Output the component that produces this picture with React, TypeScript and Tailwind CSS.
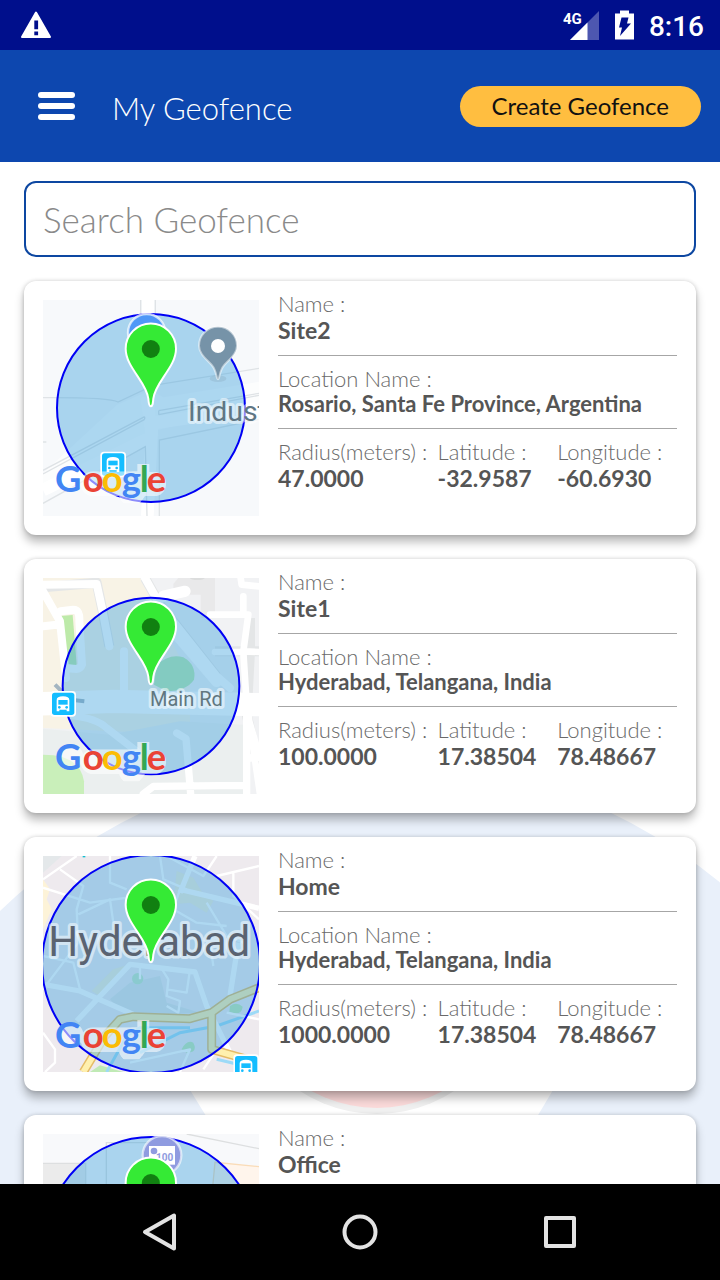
import type { ReactNode } from "react";

type Geofence = {
  name: string;
  location?: string;
  radius?: string;
  latitude?: string;
  longitude?: string;
  map: ReactNode;
};

function Halo({ x, y, size, color, children }: { x: number; y: number; size: number; color: string; children: string }) {
  return (
    <text
      x={x}
      y={y}
      fontSize={size}
      fill={color}
      stroke="#ffffff"
      strokeOpacity={0.5}
      strokeWidth={18}
      strokeLinejoin="round"
      paintOrder="stroke"
      fontFamily="Roboto, sans-serif"
    >
      {children}
    </text>
  );
}

function Bus({ x, y }: { x: number; y: number }) {
  return (
    <g transform={`translate(${x} ${y})`}>
      <rect x={-5} y={-5} width={77} height={77} rx={11} fill="#ffffff" />
      <rect width={67} height={67} rx={8} fill="#14bdff" />
      <path d="M14 56V22q0-11 19-11t19 11v34h-8v-5H22v5z" fill="#ffffff" />
      <path d="M19 22h28v14H19z" fill="#14bdff" />
      <circle cx={22} cy={44} r={4} fill="#14bdff" />
      <circle cx={44} cy={44} r={4} fill="#14bdff" />
    </g>
  );
}

function Pin() {
  return (
    <g>
      <path
        d="M362 349C357 349 356 340 355 326C350 276 287 232 287 176A75.500 75.500 0 0 1 438 176C438 232 375 276 370 326C369 340 368 349 362 349Z"
        fill="#35ea35"
        stroke="#ffffff"
        strokeWidth={6}
      />
      <circle cx={362.500} cy={177} r={27} fill="#118011" />
    </g>
  );
}

const LOGO: [string, number, string][] = [
  ["G", 75, "#4285f4"],
  ["o", 158, "#ea4335"],
  ["o", 215, "#fbbc05"],
  ["g", 275, "#4285f4"],
  ["l", 329, "#34a853"],
  ["e", 350, "#ea4335"],
];

function GoogleLogo() {
  return (
    <g>
      <path
        d="M122 566h1M189 581h190M304 581v30M341 550v44"
        stroke="#ffffff"
        strokeOpacity={0.55}
        strokeWidth={74}
        strokeLinecap="round"
        fill="none"
        clipPath="url(#logo-halo)"
      />
      <text y={607} fontFamily="Lato, sans-serif" fontSize={109} fontWeight={700}>
        {LOGO.map(([letter, x, color]) => (
          <tspan key={x} x={x} fill={color}>
            {letter}
          </tspan>
        ))}
      </text>
    </g>
  );
}

function MapView({ title, base, radius, ground, above }: { title: string; base: string; radius: number; ground: ReactNode; above: ReactNode }) {
  return (
    <svg viewBox="39 30 648 648" role="img" aria-label={title} className="my-[19px] size-[216px] shrink-0">
      <defs>
        <clipPath id="logo-halo">
          <path d="M72 566A50 50 0 0 1 158 536L175 544H322V522H358V546H380A37 37 0 0 1 380 618H345L330 640H280L262 618H170A54 54 0 0 1 72 566Z" />
        </clipPath>
      </defs>
      <rect x={39} y={30} width={648} height={648} fill={base} />
      {ground}
      <circle cx={363} cy={354} r={radius} fill="#349ddc" fillOpacity={0.4} stroke="#0000f5" strokeWidth={6} />
      {above}
      <Pin />
      <GoogleLogo />
    </svg>
  );
}

const site2Map = (
  <MapView
    title="Map of Site2"
    base="#f7f9fb"
    radius={282}
    ground={
      <g>
        <path d="M39 585L362 425L687 346V275L400 322L362 300L260 345L39 550z" fill="#ffffff" opacity={0.6} />
        <path d="M354 30V120M352 678L366 400L700 352M39 600L366 440M366 440L350 320" stroke="#ffffff" strokeWidth={38} fill="none" />
        <path
          d="M332 30V100M376 30V100M39 323Q240 322 264 336L370 286L687 235M39 541L344 380M39 552L344 388M344 380v8M386 362L687 310M386 374L687 316M386 362v12M39 640L346 470L351 678M388 678V450L687 388M39 456h10"
          stroke="#dfe3e6"
          strokeWidth={4}
          fill="none"
        />
      </g>
    }
    above={
      <g>
        <circle cx={350} cy={128} r={56} fill="#4f98f7" stroke="#ffffff" strokeOpacity={0.7} strokeWidth={7} />
        <ellipse cx={564} cy={266} rx={25} ry={10} fill="#7e9db0" opacity={0.25} />
        <path d="M564 268C558 268 562 245 545 225C530 208 507 192 507 167A57 57 0 0 1 621 167C621 192 598 208 583 225C566 245 570 268 564 268Z" fill="#7693a8" stroke="#ffffff" strokeOpacity={0.5} strokeWidth={6} />
        <circle cx={564} cy={168} r={21} fill="#ffffff" />
        <Halo x={474} y={392} size={85} color="#5f7684">
          Indust
        </Halo>
        <Bus x={216} y={490} />
      </g>
    }
  />
);

const site1Map = (
  <MapView
    title="Map of Site1"
    base="#f1f2f4"
    radius={265}
    ground={
      <g>
        <path d="M39 30H330L480 330V500L39 480z" fill="#f8f3e6" />
        <path d="M39 482L240 500L450 460L640 470L650 678H39z" fill="#ebefef" />
        <path d="M445 30H555V150H512V80H430V48z" fill="#e9e9ea" />
        <ellipse cx={502} cy={30} rx={22} ry={6} fill="#dcdddd" />
        <path d="M92 144L128 141L140 290L112 293z" fill="#bdeaa9" />
        <path d="M39 560Q150 560 162 640V678H39z" fill="#c9efba" />
        <g stroke="#e4e6e7" strokeWidth={30} fill="none" strokeLinejoin="round">
          <path d="M39 58L200 44L218 130L238 235M345 30L390 110L560 325M687 250H555M660 150V250L650 440L687 600" />
        </g>
        <g stroke="#ffffff" fill="none" strokeLinejoin="round" strokeLinecap="round">
          <path d="M20 408L250 400L687 410" strokeWidth={70} />
          <path d="M39 50L200 48L218 130L238 235M39 70L90 160L108 330M39 175L80 170M92 130L130 125Q150 125 148 160L156 290Q150 306 130 302L110 300M282 250V370M345 30L390 110L560 325L600 360" strokeWidth={24} />
          <path d="M400 85L465 70M440 200L560 340" strokeWidth={34} />
          <path d="M540 140H655L640 250L687 252M555 252H640L652 440L687 560M640 85V130M687 55L635 50L632 30M655 440L690 678" strokeWidth={20} />
          <path d="M120 442Q200 450 230 480L365 585M440 495L468 512L482 678M340 678L370 655L640 652M660 570L687 568M650 410V678" strokeWidth={22} />
        </g>
        <path d="M380 290Q420 255 460 268Q500 290 492 335Q470 368 410 370L372 350z" fill="#b8e9b0" />
        <path d="M75 350L120 395L163 400" stroke="#a4b5c1" strokeWidth={12} fill="none" />
      </g>
    }
    above={
      <g>
        <Halo x={360} y={414} size={60} color="#617780">
          Main Rd
        </Halo>
        <Bus x={66} y={374} />
      </g>
    }
  />
);

const homeMap = (
  <MapView
    title="Map of Home"
    base="#eeeaee"
    radius={327}
    ground={
      <g>
        <path d="M39 100L60 130L50 160L65 190L39 250z" fill="#fdf3d8" />
        <path d="M39 30H95L39 80z" fill="#e4e8ea" />
        <path d="M440 75l50 20l30 50l30 20l-20 35l-50-30l-50 5zM250 370l50-15l-90 95l-25-15z" fill="#f6efd2" opacity={0.7} />
        <path d="M240 460l60-50l90-20l20 80l100 30l-220 10z" fill="#dfe3e5" />
        <circle cx={323} cy={398} r={17} fill="#c4e8c6" />
        <path d="M600 480q20-15 38 2q-4 30-40 15zM455 610q15-30 35-20q15 30-20 30zM180 678l30-20l70 20z" fill="#c0eab5" />
        <path d="M230 678L290 570L330 545L480 545M330 620L450 560L560 540L687 495M560 640L687 670" stroke="#9cdaf7" strokeWidth={9} fill="none" />
        <g stroke="#ffffff" fill="none" strokeLinejoin="round">
          <path d="M39 415L150 435L310 505M140 525L300 355L495 378L530 480L610 640M450 130L687 187M495 30L450 140M600 450L625 290" strokeWidth={16} />
          <path
            d="M39 100L140 30M39 125L180 170L330 150M90 70L160 120L140 190L145 290L39 430M145 205L240 160L250 230M390 30L400 100L470 130M410 30L520 90L560 30M560 90L687 60M610 80V150L687 220M450 130L430 190L500 230L590 240M530 170L590 270L640 290M240 30V110L290 130M39 560L75 610V650L45 678M330 355V400M390 360L415 400L410 450L450 465L445 500L410 480M480 370L470 440L410 430M590 500L687 520M300 650L480 610L450 678M520 670L560 610M39 330L130 350L150 430M540 290L550 360"
            strokeWidth={7}
          />
        </g>
        <path d="M160 678L225 570L270 520L310 512L480 518L545 500L600 460L687 425M545 500V610L687 650" stroke="#e5bc67" strokeWidth={27} fill="none" strokeLinejoin="round" />
        <path d="M160 678L225 570L270 520L310 512L480 518L545 500L600 460L687 425M545 500V610L687 650" stroke="#fff0ae" strokeWidth={18} fill="none" strokeLinejoin="round" />
        <path d="M158 30h8v4h-8z" fill="#14bdd0" />
      </g>
    }
    above={
      <g>
        <Halo x={55} y={330} size={126} color="#5a6371">
          Hyderabad
        </Halo>
        <Bus x={615} y={630} />
      </g>
    }
  />
);

const officeMap = (
  <MapView
    title="Map of Office"
    base="#f8f9fb"
    radius={315}
    ground={
      <g>
        <path d="M39 118H167V678H39z" fill="#ebebeb" />
        <path d="M555 115L687 128V678H540z" fill="#fff5ec" />
        <path d="M39 118H167V678M229 200V56H360M470 30L687 74" stroke="#dddfe0" strokeWidth={4} fill="none" />
        <path d="M547 200L555 115L687 128" stroke="#fadcb8" strokeWidth={4} fill="none" />
      </g>
    }
    above={
      <g>
        <circle cx={396} cy={94} r={58} fill="#8f9be0" stroke="#ffffff" strokeOpacity={0.6} strokeWidth={7} />
        <rect x={357} y={66} width={78} height={56} fill="#ffffff" />
        <circle cx={372} cy={81} r={10} fill="#8f9be0" />
        <text x={378} y={110} fontSize={30} fontWeight={700} fill="#8f9be0" fontFamily="Roboto, sans-serif">
          100
        </text>
      </g>
    }
  />
);

const geofences: Geofence[] = [
  { name: "Site2", location: "Rosario, Santa Fe Province, Argentina", radius: "47.0000", latitude: "-32.9587", longitude: "-60.6930", map: site2Map },
  { name: "Site1", location: "Hyderabad, Telangana, India", radius: "100.0000", latitude: "17.38504", longitude: "78.48667", map: site1Map },
  { name: "Home", location: "Hyderabad, Telangana, India", radius: "1000.0000", latitude: "17.38504", longitude: "78.48667", map: homeMap },
  { name: "Office", map: officeMap },
];

function Field({ label, value, className = "" }: { label: string; value: string; className?: string }) {
  return (
    <div className={className}>
      <dt className="text-[22px] leading-[26px] font-light whitespace-nowrap text-[#6a6a6a]">{label} :</dt>
      <dd className="text-[23px] leading-[26px] font-bold whitespace-nowrap text-[#555555]">{value}</dd>
    </div>
  );
}

function GeofenceCard({ item }: { item: Geofence }) {
  return (
    <li className="flex gap-[19px] rounded-[12px] bg-white px-[19px] shadow-[0_7px_10px_rgba(0,0,0,0.27),0_0_4px_rgba(0,0,0,0.18)]">
      {item.map}
      <dl className="min-w-0 flex-1 pt-[10px]">
        <Field label="Name" value={item.name} className="pb-3" />
        {item.location && (
          <div className="border-y border-[#a6a6a6] pt-[10px] pb-3">
            <dt className="text-[22px] leading-[26px] font-light text-[#6a6a6a]">Location Name :</dt>
            <dd className="text-[22px] leading-6 font-bold whitespace-nowrap text-[#555555]">{item.location}</dd>
          </div>
        )}
        {item.radius && item.latitude && item.longitude && (
          <div className="flex pt-[10px]">
            <Field label="Radius(meters)" value={item.radius} className="w-2/5" />
            <Field label="Latitude" value={item.latitude} className="w-[30%]" />
            <Field label="Longitude" value={item.longitude} className="w-[30%]" />
          </div>
        )}
      </dl>
    </li>
  );
}

function StatusBar() {
  return (
    <div className="flex h-[50px] shrink-0 items-center justify-between bg-[#000f8c] pr-4 pl-[21px] text-white">
      <svg viewBox="0 0 30 28" className="h-7 w-[30px]" aria-label="Warning">
        <path d="M15 1.500L29 26H1z" fill="#ffffff" stroke="#ffffff" strokeWidth={2} strokeLinejoin="round" />
        <path d="M13.300 9.500h3.800v8.800h-3.800zM13.300 20.500h3.800v3.700h-3.800z" fill="#000f8c" />
      </svg>
      <div className="flex items-center gap-[15px]">
        <svg viewBox="0 0 37 32" className="h-8 w-[37px]" aria-label="4G signal">
          <path d="M36 2V31H7z" fill="#4d57b0" />
          <path d="M24.500 13.500V31H7z" fill="#ffffff" />
          <text x={0} y={15} fontSize={15} fontWeight={700} fill="#ffffff" fontFamily="Roboto, sans-serif">
            4G
          </text>
        </svg>
        <svg viewBox="0 0 19 30" className="h-[30px] w-[19px]" aria-label="Battery charging">
          <path d="M5 0.500h9V3.500h5V29.500H0V3.500h5z" fill="#ffffff" />
          <path d="M6.500 7.500h7l-1.500 6h4L5 26l2-8.500H4z" fill="#000f8c" />
        </svg>
        <time className="pt-1 font-['Roboto',sans-serif] text-[28px] leading-8 font-medium">8:16</time>
      </div>
    </div>
  );
}

export default function App() {
  return (
    <div className="flex h-screen flex-col overflow-hidden bg-white font-['Lato',sans-serif]">
      <StatusBar />
      <header className="flex h-28 shrink-0 items-center bg-[#0d47af] pr-[19px] pl-[38px]">
        <button type="button" aria-label="Open menu">
          <svg viewBox="0 0 37 28" className="h-7 w-[37px]" fill="#ffffff">
            <rect width={37} height={6} y={0} rx={3} />
            <rect width={37} height={6} y={11} rx={3} />
            <rect width={37} height={6} y={22} rx={3} />
          </svg>
        </button>
        <h1 className="ml-[37px] flex-1 pt-1 text-[31px] leading-9 font-light text-white">My Geofence</h1>
        <button type="button" className="h-[41px] rounded-full bg-[#ffbe40] px-8 text-2xl text-[#111111]">
          Create Geofence
        </button>
      </header>

      <main className="relative min-h-0 flex-1">
        <svg viewBox="0 0 720 1022" preserveAspectRatio="xMidYMax slice" className="absolute inset-0 size-full" aria-hidden="true">
          <circle cx={376} cy={1138} r={541} fill="#e9f0fa" />
          <path d="M130 800L190 928L216 970H528L553 928L610 800z" fill="#ffffff" />
          <path d="M236 811A141 141 0 0 0 518 811z" fill="#f0f0f0" />
          <path d="M241 810A136 136 0 0 0 513 810z" fill="#fbdada" />
        </svg>
        <div className="relative h-full overflow-y-auto px-6 pt-[19px] [scrollbar-width:none]">
          <input
            type="search"
            aria-label="Search Geofence"
            placeholder="Search Geofence"
            className="block h-[76px] w-full rounded-[12px] border-2 border-[#0d47a1] bg-white px-[17px] text-[35px] font-light text-[#555555] placeholder:text-[#8a8a8a]"
          />
          <ul className="mt-6 flex flex-col gap-6 pb-6">
            {geofences.map((item) => (
              <GeofenceCard key={item.name} item={item} />
            ))}
          </ul>
        </div>
      </main>

      <nav className="flex h-24 shrink-0 items-center justify-center gap-[160px] bg-black">
        <button type="button" aria-label="Back">
          <svg viewBox="0 0 40 40" className="size-10" fill="none" stroke="#e3e3e3" strokeWidth={4} strokeLinejoin="round">
            <path d="M34 3.500V36.500L5 20z" />
          </svg>
        </button>
        <button type="button" aria-label="Home">
          <svg viewBox="0 0 40 40" className="size-10" fill="none" stroke="#e3e3e3" strokeWidth={4}>
            <circle cx={20} cy={20} r={15.500} />
          </svg>
        </button>
        <button type="button" aria-label="Recent apps">
          <svg viewBox="0 0 40 40" className="size-10" fill="none" stroke="#e3e3e3" strokeWidth={4} strokeLinejoin="round">
            <rect x={6} y={6} width={28} height={28} />
          </svg>
        </button>
      </nav>
    </div>
  );
}
